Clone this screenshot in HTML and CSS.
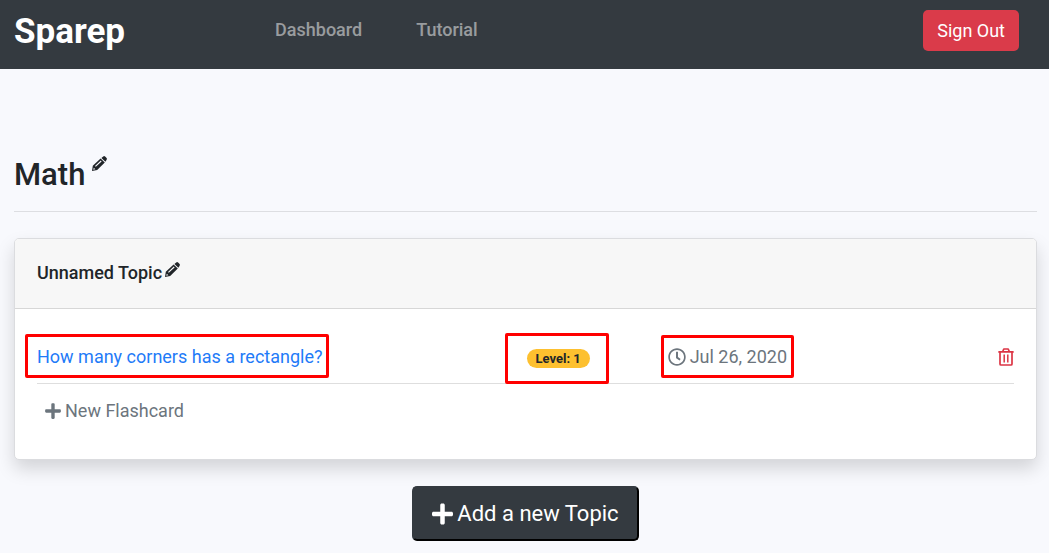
FILE: index.html
```html
<!DOCTYPE html>
<html lang="en">
<head>
<meta charset="utf-8">
<meta name="viewport" content="width=device-width, initial-scale=1">
<title>Sparep</title>
<link rel="stylesheet" href="styles.css">
</head>
<body>
<svg class="sprite" aria-hidden="true">
  <symbol id="pencil" viewBox="0 0 15 15">
    <path fill="currentColor" fill-rule="evenodd" d="M0 15L0.800 9.800L8.600 2.600L12.800 6.600L5.200 13.900ZM1.200 13.800L3.300 13.200L1.800 11.700ZM3 10L3.800 10.800L9.600 5.400L8.800 4.600ZM9.400 1.900L11.200 0.400Q12.200-0.200 13.100 0.500L14.600 2Q15.300 2.900 14.500 3.900L13.400 5.800Z"/>
  </symbol>
  <symbol id="plus" viewBox="0 0 448 512">
    <path fill="currentColor" d="M416 208H272V64c0-17.670-14.330-32-32-32h-32c-17.670 0-32 14.330-32 32v144H32c-17.670 0-32 14.330-32 32v32c0 17.670 14.330 32 32 32h144v144c0 17.670 14.330 32 32 32h32c17.670 0 32-14.330 32-32V304h144c17.670 0 32-14.330 32-32v-32c0-17.670-14.330-32-32-32z"/>
  </symbol>
  <symbol id="clock" viewBox="0 0 512 512">
    <path fill="currentColor" d="M256 8C119 8 8 119 8 256s111 248 248 248 248-111 248-248S393 8 256 8zm0 448c-110.500 0-200-89.500-200-200S145.500 56 256 56s200 89.500 200 200-89.500 200-200 200zm61.800-104.400l-84.900-61.700c-3.100-2.300-4.900-5.900-4.900-9.700V116c0-6.600 5.400-12 12-12h32c6.600 0 12 5.400 12 12v141.700l66.800 48.600c5.400 3.900 6.500 11.400 2.600 16.800L334.600 349c-3.900 5.300-11.400 6.500-16.800 2.600z"/>
  </symbol>
  <symbol id="trash" viewBox="0 0 16 18">
    <path fill="none" stroke="currentColor" stroke-width="1.700" stroke-linejoin="round" stroke-linecap="round" d="M1 3.900H15M4.700 3.500L5.800 1H10.200L11.300 3.500M2 4V16Q2 17 3 17H13Q14 17 14 16V4"/>
    <path fill="none" stroke="currentColor" stroke-width="1.500" d="M6.200 6.500V14.500M9.800 6.500V14.500"/>
  </symbol>
</svg>
<header class="navbar">
  <a class="brand" href="#">Sparep</a>
  <nav class="nav">
    <a class="nav-link" href="#">Dashboard</a>
    <a class="nav-link" href="#">Tutorial</a>
  </nav>
  <button class="sign-out" type="button">Sign Out</button>
</header>
<main class="page">
  <div class="title">
    <h1 class="title-text">Math</h1>
    <button class="icon-button" type="button" aria-label="Edit subject name"><svg class="pencil"><use href="#pencil"/></svg></button>
  </div>
  <section class="card">
    <div class="card-header">
      <h2 class="card-title">Unnamed Topic</h2>
      <button class="icon-button" type="button" aria-label="Edit topic name"><svg class="pencil"><use href="#pencil"/></svg></button>
    </div>
    <div class="card-body">
      <div class="flashcard">
        <div class="cell"><a class="question marked" href="#">How many corners has a rectangle?</a></div>
        <div class="cell level"><span class="marked marked-level"><span class="badge">Level: 1</span></span></div>
        <div class="cell"><span class="date marked marked-date"><svg class="clock" aria-hidden="true"><use href="#clock"/></svg>Jul 26, 2020</span></div>
        <button class="icon-button delete" type="button" aria-label="Delete flashcard"><svg class="trash"><use href="#trash"/></svg></button>
      </div>
      <button class="new-card" type="button"><svg class="plus" aria-hidden="true"><use href="#plus"/></svg>New Flashcard</button>
    </div>
  </section>
  <button class="add-topic" type="button"><svg class="plus-large" aria-hidden="true"><use href="#plus"/></svg>Add a new Topic</button>
</main>
</body>
</html>
```
FILE: styles.css
```css
* {
  box-sizing: border-box;
}

body {
  margin: 0;
  background: #f8f9fd;
  color: #212529;
  font-family: Roboto, "Liberation Sans", sans-serif;
  font-size: 18px;
  line-height: 28px;
}

button {
  font: inherit;
  color: inherit;
  background: none;
  border: 0;
  padding: 0;
  cursor: pointer;
}

a {
  text-decoration: none;
}

svg {
  display: block;
  flex: none;
}

.sprite {
  position: absolute;
  width: 0;
  height: 0;
}

.navbar {
  display: flex;
  align-items: flex-start;
  padding: 10px 30px 10px 14px;
  min-height: 69px;
  background: #343a40;
}

.brand {
  color: #fff;
  font-size: 35px;
  font-weight: 700;
  line-height: 44px;
}

.nav {
  display: flex;
  gap: 54px;
  margin-left: 150px;
  line-height: 40px;
}

.nav-link {
  color: rgba(255, 255, 255, 0.5);
  font-weight: 500;
}

.sign-out {
  margin-left: auto;
  padding: 7px 14px 6px;
  border-radius: 5px;
  background: #da3b4a;
  color: #fff;
}

.page {
  display: flex;
  flex-direction: column;
  padding: 84px 12px 12px 14px;
}

.title {
  display: flex;
  align-items: flex-start;
  gap: 7px;
  padding-bottom: 15px;
  border-bottom: 1px solid #dddee2;
}

.title-text {
  margin: 0;
  font-size: 31px;
  font-weight: 500;
  line-height: 43px;
}

.title .icon-button {
  padding-top: 3px;
}

.pencil {
  width: 15px;
  height: 15px;
}

.card {
  margin: 26px 0;
  border: 1px solid #dbdcdf;
  border-radius: 5px;
  background: #fff;
  box-shadow: 0 9px 18px rgba(0, 0, 0, 0.15);
}

.card-header {
  display: flex;
  align-items: flex-start;
  gap: 3px;
  padding: 20px 22px 21px;
  border-bottom: 1px solid #d7d7d7;
  border-radius: 4px 4px 0 0;
  background: #f7f7f7;
}

.card-title {
  margin: 0;
  font-size: 18px;
  font-weight: 500;
  line-height: 28px;
}

.card-header .icon-button {
  padding-top: 3px;
}

.card-body {
  padding: 22px 22px 34px;
}

.flashcard {
  display: grid;
  grid-template-columns: 489fr 141fr 330fr auto;
  align-items: center;
  padding: 12px 0;
  border-bottom: 1px solid #dedede;
}

.cell {
  display: flex;
}

.question {
  color: #1f7bf8;
}

.marked {
  position: relative;
}

.marked::after {
  content: "";
  position: absolute;
  inset: -9px -6px -7px -12px;
  border: 3px solid #f00;
  border-radius: 2px;
  pointer-events: none;
}

.marked-level::after {
  inset: -16px -19px -16px -22px;
}

.marked-date::after {
  inset: -8px -7px -7px -7px;
}

.level {
  padding-top: 3px;
}

.marked-level {
  display: flex;
}

.badge {
  padding: 3px 9px;
  border-radius: 10px;
  background: #fdc02f;
  font-size: 13px;
  font-weight: 700;
  line-height: 13px;
}

.date {
  display: flex;
  align-items: center;
  gap: 4px;
  color: #6c757d;
}

.clock {
  width: 18px;
  height: 18px;
}

.delete {
  color: #dc3545;
}

.trash {
  width: 16px;
  height: 18px;
}

.new-card {
  display: flex;
  align-items: center;
  gap: 4px;
  margin-top: 13px;
  padding-left: 8px;
  color: #6c757d;
}

.plus {
  width: 16px;
  height: 18px;
}

.add-topic {
  display: flex;
  align-items: center;
  align-self: center;
  gap: 4px;
  padding: 9px 18px;
  border: 2px solid;
  border-color: #343a40 #000 #000 #343a40;
  border-radius: 5px;
  background: #343a40;
  color: #fff;
  font-size: 22px;
  line-height: 33px;
}

.plus-large {
  width: 21px;
  height: 24px;
}
```
